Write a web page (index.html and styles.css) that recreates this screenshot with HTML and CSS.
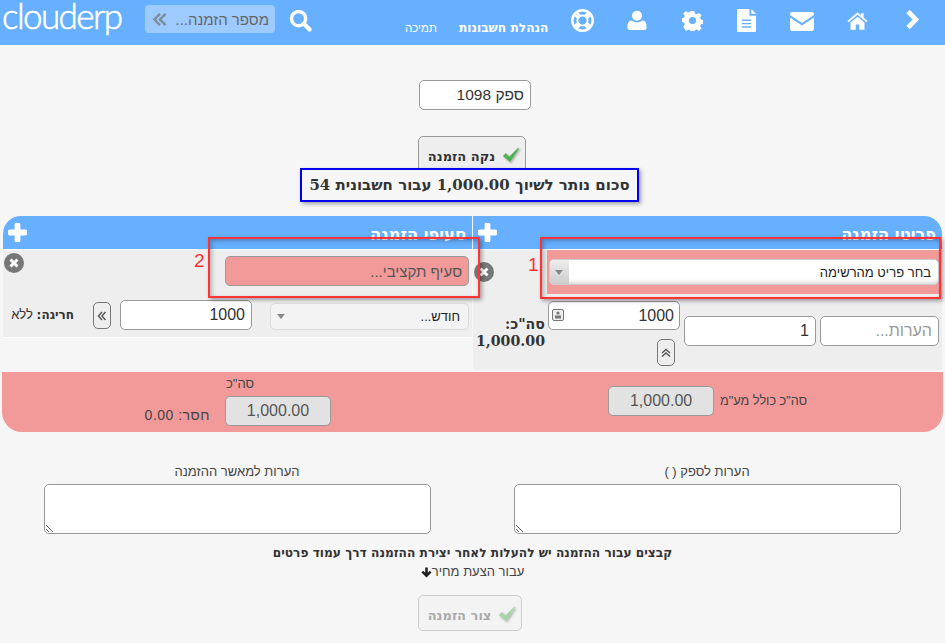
FILE: index.html
```html
<!DOCTYPE html>
<html lang="he">
<head>
<meta charset="utf-8">
<title>הזמנה</title>
<link rel="stylesheet" href="styles.css">
</head>
<body>
<header class="topbar">
  <div class="logo">clouderp</div>
  <div class="search">
    <svg class="search-chev" viewBox="0 0 16 14"><path d="M8 1 2 7l6 6M14 1 8 7l6 6" fill="none" stroke="#7d8b99" stroke-width="2.6"/></svg>
    <span class="search-text">מספר הזמנה...</span>
  </div>
  <svg class="ic ic-search" viewBox="0 0 24 24"><circle cx="10" cy="10" r="7.4" fill="none" stroke="#fff" stroke-width="3.6"/><path d="m15.5 15.5 6 6" stroke="#fff" stroke-width="4.4" stroke-linecap="round"/></svg>
  <nav class="links"><a class="link">תמיכה</a><a class="link link-b">הנהלת חשבונות</a></nav>
  <div class="icons">
    <svg class="ic ic-ring" viewBox="0 0 24 24"><circle cx="12" cy="12" r="10.700" fill="none" stroke="#fff" stroke-width="2.600"/><circle cx="12" cy="12" r="5.300" fill="none" stroke="#fff" stroke-width="2"/><path d="m5 5 4 4M19 5l-4 4M5 19l4-4M19 19l-4-4" stroke="#fff" stroke-width="5.500"/></svg>
    <svg class="ic ic-user" viewBox="0 0 24 24"><circle cx="12" cy="7" r="6" fill="#fff"/><path d="M3.500 24C1.500 24 .5 23 .5 21c0-4 1-8.500 5-8.500 1.500 1.400 3.800 2.200 6.500 2.200s5-.8 6.500-2.200c4 0 5 4.500 5 8.500 0 2-1 3-3 3z" fill="#fff"/></svg>
    <svg class="ic ic-gear" viewBox="0 0 24 24"><path fill="#fff" fill-rule="evenodd" d="M10 1h4l.7 3 2.200.9 2.600-1.600 2.800 2.800-1.600 2.600.9 2.200 3 .7v4l-3 .7-.9 2.200 1.600 2.600-2.800 2.800-2.600-1.600-2.200.9-.7 3h-4l-.7-3-2.200-.9-2.600 1.600L1.500 19l1.600-2.600-.9-2.200-3-.7v-4l3-.7.9-2.200-1.600-2.600 2.800-2.800 2.600 1.600 2.200-.9zM12 8a4 4 0 1 0 0 8 4 4 0 0 0 0-8z"/></svg>
    <svg class="ic ic-file" viewBox="0 0 21 24"><path fill="#fff" fill-rule="evenodd" d="M1 0h12v7h7v16a1 1 0 0 1-1 1H1a1 1 0 0 1-1-1V1a1 1 0 0 1 1-1zm14 0 5 5h-5zM5 11v1.500h10V11zm0 3.500V16h10v-1.500zM5 18v1.500h10V18z"/></svg>
    <svg class="ic ic-mail" viewBox="0 0 24 19"><path fill="#fff" d="M2 0h20a2 2 0 0 1 2 2v1L12 11 0 3V2a2 2 0 0 1 2-2zM0 5.500 12 13.500l12-8V17a2 2 0 0 1-2 2H2a2 2 0 0 1-2-2z"/></svg>
    <svg class="ic ic-home" viewBox="0 0 24 20"><path fill="#fff" d="M12 0 .5 10l1.300 1.400L12 2.800l10.200 8.600 1.300-1.400L19 6V1h-3v2.500zM12 5 4 11.800V20h6v-6h4v6h6v-8.200z"/></svg>
    <svg class="ic ic-chev" viewBox="0 0 14 20"><path d="m3 2 8 8-8 8" fill="none" stroke="#fff" stroke-width="4.600"/></svg>
  </div>
</header>

<main class="page">
  <div class="center vendor-row"><input class="field vendor" value="ספק 1098" dir="rtl"></div>
  <div class="center clear-row">
    <button class="action"><svg class="check" viewBox="0 0 20 18"><path d="M1 10l3-3 4 4L18 1l1 1-10 15z" fill="#4caf50" stroke="#8fbf8f" stroke-width=".6"/></svg>נקה הזמנה</button>
  </div>
  <div class="center balance-row">
    <div class="balance">סכום נותר לשיוך 1,000.00 עבור חשבונית 54</div>
  </div>

  <section class="board">
    <div class="tables">
      <div class="panel">
        <div class="panel-head panel-head-r">
          <span class="panel-title">פריטי הזמנה</span>
          <svg class="plus" viewBox="0 0 18 18"><path d="M9 2v14M2 9h14" stroke="#fff" stroke-width="5.500" stroke-linecap="round"/></svg>
        </div>
        <div class="panel-body panel-body-r">
          <div class="pick-strip">
            <div class="select select-main">
              <span class="select-label">בחר פריט מהרשימה</span>
              <span class="select-arrow"></span>
            </div>
          </div>
          <div class="item-row">
            <input class="field note" placeholder="הערות...">
            <input class="field qty" value="1" dir="rtl">
            <div class="price-col">
              <div class="price-box">
                <span class="price-val">1000</span>
                <svg class="price-ic" viewBox="0 0 12 12"><rect x=".5" y=".5" width="11" height="11" rx="1.500" fill="#eee" stroke="#777"/><circle cx="6" cy="4" r="1.600" fill="#777"/><rect x="3" y="6.500" width="6" height="3" fill="#777"/></svg>
              </div>
              <button class="mini mini-up"><svg viewBox="0 0 10 10"><path d="M1 5 5 1.500 9 5M1 8.500 5 5l4 3.500" fill="none" stroke="#555" stroke-width="1.400"/></svg></button>
            </div>
            <div class="line-total"><b>סה"כ:</b><b>1,000.00</b></div>
          </div>
          <svg class="remove remove-r" viewBox="0 0 20 20"><circle cx="10" cy="10" r="10" fill="#777"/><path d="m6.500 6.500 7 7m0-7-7 7" stroke="#fff" stroke-width="3"/></svg>
        </div>
      </div>

      <div class="panel">
        <div class="panel-head">
          <span class="panel-title">סעיפי הזמנה</span>
          <svg class="plus" viewBox="0 0 18 18"><path d="M9 2v14M2 9h14" stroke="#fff" stroke-width="5.500" stroke-linecap="round"/></svg>
        </div>
        <div class="panel-body panel-body-l">
          <input class="field budget" placeholder="סעיף תקציבי...">
          <div class="budget-row">
            <div class="select select-month">
              <span class="select-label">חודש...</span>
              <span class="arrow-plain"></span>
            </div>
            <input class="field amount" value="1000" dir="rtl">
            <button class="mini mini-left"><svg viewBox="0 0 10 10"><path d="M5 1 1.500 5 5 9M8.500 1 5 5l3.500 4" fill="none" stroke="#555" stroke-width="1.400"/></svg></button>
            <span class="overrun"><b>חריגה:</b> ללא</span>
          </div>
          <svg class="remove remove-l" viewBox="0 0 20 20"><circle cx="10" cy="10" r="10" fill="#777"/><path d="m6.500 6.500 7 7m0-7-7 7" stroke="#fff" stroke-width="3"/></svg>
        </div>
      </div>
    </div>

    <div class="totals">
      <div class="tot-r">
        <span class="tot-label tot-label-r">סה"כ כולל מע"מ</span>
        <input class="field readonly" value="1,000.00" readonly>
      </div>
      <div class="tot-l">
        <div class="tot-col">
          <span class="tot-label tot-label-l">סה"כ</span>
          <input class="field readonly" value="1,000.00" readonly>
        </div>
        <span class="tot-label missing">חסר: 0.00</span>
      </div>
    </div>
  </section>

  <section class="notes">
    <label class="note-col"><span class="note-label">הערות לספק ( )</span><textarea class="area"></textarea></label>
    <label class="note-col"><span class="note-label">הערות למאשר ההזמנה</span><textarea class="area"></textarea></label>
  </section>

  <p class="info-b">קבצים עבור ההזמנה יש להעלות לאחר יצירת ההזמנה דרך עמוד פרטים</p>
  <p class="info">עבור הצעת מחיר<svg class="down" viewBox="0 0 12 12"><path d="M6 1v8M1.500 5.500 6 10l4.500-4.500" fill="none" stroke="#222" stroke-width="2.800"/></svg></p>
  <div class="center submit-row">
    <button class="action action-off"><svg class="check" viewBox="0 0 20 18"><path d="M1 10l3-3 4 4L18 1l1 1-10 15z" fill="#a5d6a7" stroke="#c5dcc5" stroke-width=".6"/></svg>צור הזמנה</button>
  </div>
</main>

<div class="mark mark-1"></div>
<div class="mark mark-2"></div>
<span class="mark-num num-1">1</span>
<span class="mark-num num-2">2</span>
</body>
</html>
```

FILE: styles.css
```css
* { box-sizing: border-box; }
html, body { margin: 0; height: 643px; overflow: hidden; }
body {
  background: #f6f6f6;
  font-family: "Liberation Sans", Arial, sans-serif;
  color: #333;
  position: relative;
}
button { font-family: inherit; padding: 0; }

.topbar {
  height: 45px;
  background: #66b0ff;
  display: flex;
  align-items: flex-start;
  box-shadow: 0 1px 0 #fff;
}
.logo {
  width: 121px;
  margin-left: 2px;
  height: 45px;
  font-family: "Lato", sans-serif;
  font-weight: 300;
  font-size: 35px;
  line-height: 31px;
  letter-spacing: -1.600px;
  color: #fff;
  -webkit-text-stroke: .6px #fff;
}
.search {
  width: 130px;
  height: 28px;
  margin: 5px 0 0 22px;
  background: #9dcbff;
  border-radius: 4px;
  display: flex;
  align-items: center;
  padding: 0 6px 0 7px;
  justify-content: space-between;
}
.search-chev { width: 16px; height: 13px; }
.search-text { direction: rtl; font-size: 15px; color: #666; }
.ic { width: 24px; height: 24px; display: block; }
.ic-search { width: 23px; height: 23px; margin: 9px 0 0 14px; }
.links {
  display: flex;
  gap: 22px;
  margin: 21px 0 0 93px;
}
.link { font-size: 11.500px; line-height: 14px; color: #fff; direction: rtl; }
.link-b { font-weight: 700; font-family: "DejaVu Sans", sans-serif; font-size: 12.200px; }
.icons {
  display: grid;
  grid-template-columns: repeat(7, 55px);
  justify-items: center;
  align-items: center;
  margin: 8px 5.500px 0 auto;
  height: 24px;
}
.ic-ring { width: 23px; height: 23px; }
.ic-user { width: 20px; height: 22px; }
.ic-gear { width: 21px; height: 21px; }
.ic-file { width: 20px; height: 23px; }
.ic-mail { width: 24px; height: 19px; margin-top: 2px; }
.ic-home { width: 21px; height: 18px; margin-top: 1px; }
.ic-chev { width: 14px; height: 21px; margin-top: -2px; }

.page { display: block; }
.center { display: flex; justify-content: center; }
.vendor-row { padding: 35px 0 0 5px; }
.field {
  height: 30px;
  border: 1px solid #999;
  border-radius: 5px;
  background: #fff;
  font: 16px "Liberation Sans", Arial, sans-serif;
  color: #333;
  padding: 0 6px;
  direction: rtl;
  outline: 0;
}
.field::placeholder { color: #999; opacity: 1; }
.vendor { width: 112px; text-align: right; font-size: 15.500px; }
.clear-row { padding: 26px 2px 0 0; height: 62px; }
.action {
  width: 108px;
  height: 36px;
  border: 1px solid #999;
  border-radius: 5px;
  background: #eee;
  direction: rtl;
  display: flex;
  align-items: center;
  justify-content: center;
  gap: 7px;
  font: 700 13px "DejaVu Sans", sans-serif;
  color: #333;
  padding: 5px 0 0 5px;
}
.check { width: 18px; height: 16px; margin-top: -4px; filter: drop-shadow(1px 1px 1px #aaa); }
.balance-row { height: 0; padding-right: 6px; position: relative; top: -4px; }
.balance {
  width: 339px;
  height: 34px;
  flex: none;
  border: 2px solid #00e;
  background: #f6f6f6;
  box-shadow: 2px 2px 4px rgba(0,0,0,.35);
  direction: rtl;
  font: 700 15px "DejaVu Serif", "DejaVu Sans", serif;
  line-height: 30px;
  text-align: center;
  white-space: nowrap;
  color: #333;
  position: relative;
}

.board { margin: 44px 2px 0; }
.tables { display: grid; grid-template-columns: 469px 469px; column-gap: 1px; direction: rtl; margin: 0 1px; }
.panel { position: relative; }
.panel-head {
  height: 33px;
  background: #66b0ff;
  display: flex;
  align-items: flex-start;
  justify-content: space-between;
  padding: 4px 6px 0 5px;
  border-top-left-radius: 18px;
  direction: rtl;
}
.panel-head-r { border-top-left-radius: 0; border-top-right-radius: 18px; }
.panel-title {
  font: 700 16.300px/24px "DejaVu Sans", sans-serif;
  color: #fff;
  height: 19px;
  padding-top: 3px;
}
.plus { width: 19px; height: 19px; margin: 3px 0 0; }
.panel-body { background: #eee; border-top: 1px solid #fff; position: relative; }
.panel-body-r { height: 121px; padding: 0 3px 0 0; }
.panel-body-l { height: 89px; padding: 6px 3px 0 0; border-bottom: 1px solid #fff; }
.pick-strip {
  height: 44px;
  background: #f29a9a;
  padding: 9px 0 0 2px;
  margin-left: 74px;
}
.select {
  display: flex;
  align-items: center;
  justify-content: space-between;
  border-radius: 5px;
  position: relative;
}
.select-main {
  height: 26px;
  background: #fff;
  box-shadow: inset 0 -5px 5px -4px #ccc;
  border: 1px solid #ccc;
  padding-right: 7px;
}
.select-label { font-size: 13px; color: #222; }
.select-arrow {
  width: 19px;
  height: 24px;
  background: linear-gradient(#eee, #ccc);
  border-radius: 4px 0 0 4px;
  position: relative;
}
.select-arrow::after, .arrow-plain::after {
  content: "";
  position: absolute;
  left: 5px;
  top: 10px;
  border: 4px solid transparent;
  border-top: 5px solid #888;
  border-bottom: 0;
}
.item-row { display: flex; direction: rtl; align-items: flex-start; gap: 4px; }
.note { width: 119px; margin-top: 22px; }
.qty { width: 132px; margin-top: 22px; }
.price-col { width: 132px; margin-top: 7px; display: flex; flex-direction: column; }
.price-box {
  width: 132px;
  height: 29px;
  border: 1px solid #999;
  border-radius: 5px;
  background: #fff;
  display: flex;
  justify-content: space-between;
  align-items: center;
  padding: 0 5px 0 3px;
  font-size: 16px;
}
.price-ic { width: 12px; height: 12px; margin-top: -1px; }
.mini {
  width: 18px;
  height: 27px;
  border: 1px solid #777;
  border-radius: 5px;
  background: #eee;
  display: flex;
  align-items: center;
  justify-content: center;
}
.mini svg { width: 10px; height: 10px; }
.mini-up { margin: 9px 5px 0 0; align-self: flex-start; }
.line-total {
  font: 700 14.200px/17px "DejaVu Serif", "DejaVu Sans", serif;
  display: flex;
  flex-direction: column;
  align-items: flex-start;
  width: 70px;
  margin: 22px -1px 0 0;
  white-space: nowrap;
  color: #333;
}
.remove { width: 20px; height: 20px; position: absolute; }
.remove-r { left: 1px; top: 12px; }
.remove-l { left: 1px; top: 3px; }
.budget {
  display: block;
  width: 244px;
  height: 30px;
  background: #f29a9a;
  border-color: #999;
  font-size: 15px;
}
.budget::placeholder { color: #555; }
.budget-row { display: flex; direction: rtl; align-items: flex-start; margin-top: 14px; }
.select-month {
  width: 199px;
  height: 27px;
  margin-top: 3px;
  background: #f3f3f3;
  border: 1px solid #ddd;
  padding: 0 8px 0 6px;
}
.arrow-plain { width: 10px; height: 10px; position: relative; }
.arrow-plain::after { left: 0; top: 2px; }
.amount { width: 132px; margin-right: 18px; }
.mini-left { margin: 2px 9px 0 0; height: 27px; }
.overrun { font-size: 13px; margin: 7px 19px 0 0; white-space: nowrap; }
.overrun b { font-family: "DejaVu Sans", sans-serif; font-size: 12px; }

.totals {
  height: 60px;
  margin: 2px 0 0;
  width: 941px;
  background: #f29a9a;
  border-radius: 0 0 20px 20px;
  display: grid;
  grid-template-columns: 470px 471px;
  direction: rtl;
}
.tot-r { display: flex; align-items: flex-start; gap: 6px; padding: 14px 136px 0 0; }
.tot-label-r { padding-top: 8px; font-size: 12.700px; }
.tot-label { color: #444; white-space: nowrap; }
.tot-label-l { font-size: 13px; align-self: flex-end; margin-left: 1px; }
.readonly {
  width: 106px;
  background: #e2e2e2;
  text-align: center;
  direction: ltr;
  color: #555;
}
.tot-l { display: flex; align-items: flex-start; padding: 4px 142px 0 0; }
.tot-col { display: flex; flex-direction: column; gap: 5px; }
.missing { font-size: 14px; letter-spacing: .5px; margin: 31px 15px 0 0; }

.notes { display: grid; grid-template-columns: 470px 470px; direction: rtl; padding: 0 3px 0 1px; margin-top: 32px; }
.note-col { display: flex; flex-direction: column; align-items: center; gap: 4px; }
.note-label { font-size: 13px; line-height: 16px; color: #444; }
.area {
  width: 387px;
  height: 50px;
  border: 1px solid #999;
  border-radius: 5px;
  background: #fff;
  display: block;
}
.info-b, .info { margin: 0; text-align: center; direction: rtl; }
.info-b { font: 700 12.200px/16px "DejaVu Sans", sans-serif; margin-top: 11px; color: #333; }
.info { font-size: 13px; line-height: 16px; margin-top: 3px; color: #444; display: flex; justify-content: center; align-items: center; }
.down { width: 11px; height: 12px; }
.submit-row { padding: 15px 6px 0 0; }
.action-off { width: 104px; border-color: #ccc; color: #aaa; background: #f3f3f3; }

.mark {
  position: absolute;
  border: 2px solid #f33;
  box-shadow: 2px 2px 4px rgba(0,0,0,.35), inset 2px 2px 4px rgba(0,0,0,.25);
}
.mark-1 { left: 540px; top: 237px; width: 401px; height: 62px; }
.mark-2 { left: 208px; top: 237px; width: 272px; height: 61px; }
.mark-num { position: absolute; color: #f33; font-size: 19px; line-height: 22px; }
.num-1 { left: 528px; top: 254px; }
.num-2 { left: 194px; top: 250px; }
```
